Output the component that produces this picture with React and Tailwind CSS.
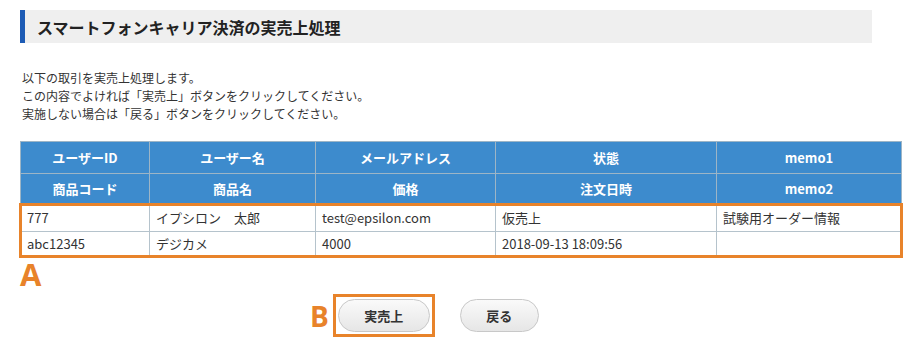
import React from "react";

const cols = "grid grid-cols-[130px_166px_180px_221px_185px]";
const font = "font-['Noto_Sans_CJK_JP','Noto_Sans',sans-serif]";

const head1 = ["ユーザーID", "ユーザー名", "メールアドレス", "状態", "memo1"];
const head2 = ["商品コード", "商品名", "価格", "注文日時", "memo2"];
const row1 = ["777", "イプシロン　太郎", "test@epsilon.com", "仮売上", "試験用オーダー情報"];
const row2 = ["abc12345", "デジカメ", "4000", "2018-09-13 18:09:56", ""];

const HeadRow = ({ cells, h }) => (
  <div className={`${cols} ${h}`}>
    {cells.map((c, i) => (
      <div
        key={i}
        className="flex items-center justify-center bg-[#3d8bcd] text-white font-bold text-[13px] border-r border-b border-[#9db5c6] first:border-l"
      >
        {c}
      </div>
    ))}
  </div>
);

const DataRow = ({ cells, h }) => (
  <div className={`${cols} ${h}`}>
    {cells.map((c, i) => (
      <div
        key={i}
        className="flex items-center pl-[6px] bg-white text-[#333] text-[13px] border-r border-b border-[#b5c3cc] first:border-l"
      >
        {c}
      </div>
    ))}
  </div>
);

export default function App() {
  return (
    <div className={`${font} bg-white w-[910px] h-[360px] pt-[10px] pl-[20px] text-[#333]`}>
      <div className="flex items-center w-[852px] h-[33px] bg-[#efefef] border-l-[5px] border-[#1d5bb5]">
        <h2 className="pl-[12px] text-[16px] font-bold text-[#222]">スマートフォンキャリア決済の実売上処理</h2>
      </div>

      <div className="mt-[26px] pl-[2px] text-[12px] leading-[18px] text-[#333]">
        <p>以下の取引を実売上処理します。</p>
        <p>この内容でよければ「実売上」ボタンをクリックしてください。</p>
        <p>実施しない場合は「戻る」ボタンをクリックしてください。</p>
      </div>

      <div className="mt-[18px] w-[882px] border-t border-[#9db5c6]">
        <HeadRow cells={head1} h="h-[32px]" />
        <HeadRow cells={head2} h="h-[30px]" />
        <div className="relative">
          <DataRow cells={row1} h="h-[28px]" />
          <DataRow cells={row2} h="h-[24px]" />
          <div className="absolute -left-[1px] -right-[1px] -top-[1px] -bottom-[2px] border-[3px] border-[#e8832a] pointer-events-none" />
        </div>
      </div>

      <div className="mt-[1px] h-[34px] text-[31px] leading-[34px] font-bold text-[#e8832a] font-['Open_Sans',sans-serif]">A</div>

      <div className="flex items-center mt-[3px] pl-[290px]">
        <span className="text-[28px] leading-none font-bold text-[#e8832a] font-['Open_Sans',sans-serif] mr-[4px]">B</span>
        <div className="border-[3px] border-[#e8832a] px-[2px] py-[2px] w-[102px] h-[43px] flex items-center">
          <button className="w-[92px] h-[33px] rounded-full border border-[#c8c8c8] bg-gradient-to-b from-[#fafafa] to-[#e6e6e6] text-[13px] font-bold text-[#333]">
            実売上
          </button>
        </div>
        <button className="ml-[25px] w-[79px] h-[33px] rounded-full border border-[#c8c8c8] bg-gradient-to-b from-[#fafafa] to-[#e6e6e6] text-[13px] font-bold text-[#333]">
          戻る
        </button>
      </div>
    </div>
  );
}
